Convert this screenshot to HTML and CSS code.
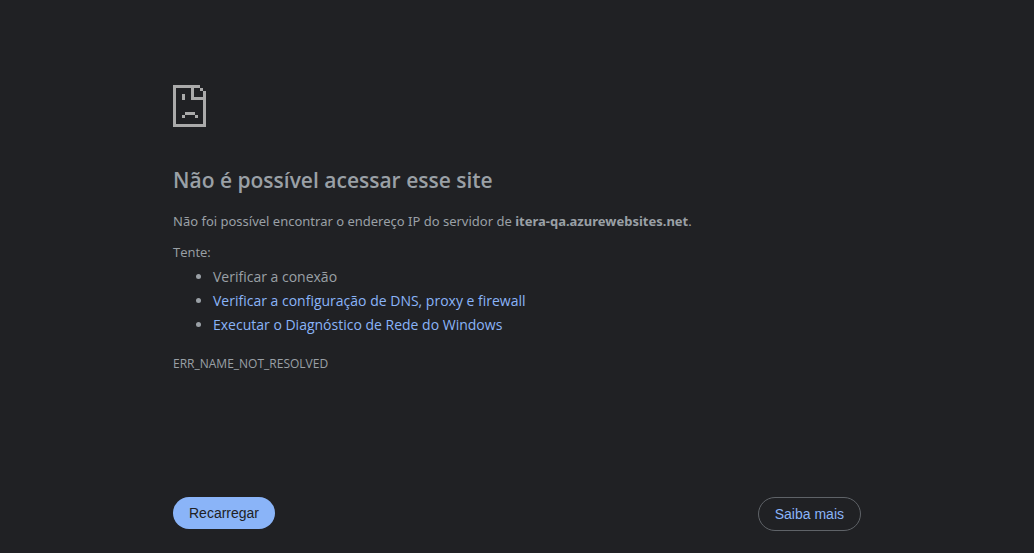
FILE: index.html
```html
<!DOCTYPE html>
<html lang="pt-BR">
<head>
<meta charset="utf-8">
<meta name="viewport" content="width=device-width, initial-scale=1">
<title>itera-qa.azurewebsites.net</title>
<link rel="stylesheet" href="styles.css">
</head>
<body>
<main class="page">
  <svg class="icon" viewBox="0 0 33 42" aria-hidden="true" shape-rendering="crispEdges">
    <path d="M0 0h27v3h-6v9h12v3H18V3H3v36h27V6h3v36H0zM27 3h3v3h-3zM9 9h3v6H9zM12 27h10v3H12zM9 30h3v3H9zM22 30h3v3h-3z"/>
  </svg>
  <h1 class="title">Não é possível acessar esse site</h1>
  <p class="summary">Não foi possível encontrar o endereço IP do servidor de <strong>itera-qa.azurewebsites.net</strong>.</p>
  <p class="try">Tente:</p>
  <ul class="suggestions">
    <li>Verificar a conexão</li>
    <li><a class="link" href="#dns">Verificar a configuração de DNS, proxy e firewall</a></li>
    <li><a class="link" href="#diagnostico">Executar o Diagnóstico de Rede do Windows</a></li>
  </ul>
  <p class="code">ERR_NAME_NOT_RESOLVED</p>
  <div class="actions">
    <button class="button primary" type="button">Recarregar</button>
    <button class="button outline" type="button">Saiba mais</button>
  </div>
</main>
</body>
</html>
```

FILE: styles.css
```css
body {
  margin: 0;
  background: #202124;
  color: #9aa0a6;
  font-family: "Segoe UI", "Open Sans", sans-serif;
  font-size: 14px;
  line-height: 24px;
}

.page {
  box-sizing: border-box;
  width: 67%;
  max-width: 688px;
  margin: 0 auto;
  padding-top: 85px;
}

.icon {
  display: block;
  width: 33px;
  height: 42px;
  fill: #aaa;
}

.title {
  margin: 38px 0 16px;
  font-size: 21px;
  font-weight: 600;
  line-height: 30px;
}

.summary,
.try {
  margin: 0;
  font-size: 13px;
  line-height: 20px;
}

.summary {
  font-family: "Segoe UI", "Noto Sans", sans-serif;
}

.try {
  margin-top: 11px;
}

.suggestions {
  margin: 3px 0 0;
  padding-left: 40px;
}

.link {
  color: #8ab4f8;
  text-decoration: none;
}

.code {
  margin: 18px 0 0;
  font-size: 12px;
  line-height: 18px;
}

.actions {
  display: flex;
  align-items: flex-start;
  justify-content: space-between;
  margin-top: 124px;
}

.button {
  padding: 8px 16px;
  border: 0;
  border-radius: 20px;
  font-family: "Liberation Sans", Arial, sans-serif;
  font-size: 14px;
  line-height: 16px;
}

.primary {
  background: #8ab4f8;
  color: #202124;
}

.outline {
  border: 1px solid #5f6368;
  background: transparent;
  color: #8ab4f8;
}
```
